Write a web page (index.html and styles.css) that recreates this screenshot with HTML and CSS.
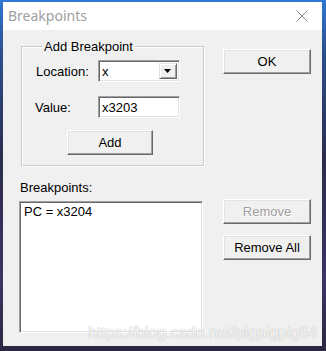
FILE: index.html
```html
<!DOCTYPE html>
<html lang="en">
<head>
    <meta charset="UTF-8">
    <title>Breakpoints</title>
    <link rel="stylesheet" href="styles.css">
</head>
<body>
    <div class="window">
        <div class="titlebar">
            <span class="title">Breakpoints</span>
            <svg class="close" width="12" height="12" viewBox="0 0 12 12">
                <path d="M0.5 0.5 L11.5 11.5 M11.5 0.5 L0.5 11.5" stroke="#8a8a8a" stroke-width="1" fill="none"/>
            </svg>
        </div>
        <div class="client">
            <div class="left">
                <fieldset class="group">
                    <legend>Add Breakpoint</legend>
                    <div class="form-grid">
                        <label class="lbl">Location:</label>
                        <div class="combo sunken">
                            <span class="combo-text">x</span>
                            <span class="combo-btn">
                                <svg width="8" height="5" viewBox="0 0 8 5"><path d="M0 0 H7 L3.5 4 Z" fill="#000"/></svg>
                            </span>
                        </div>
                        <label class="lbl lbl-value">Value:</label>
                        <div class="field sunken">x3203</div>
                    </div>
                    <button class="btn btn-add">Add</button>
                </fieldset>
                <div class="list-label">Breakpoints:</div>
                <div class="listbox sunken">
                    <div class="list-item">PC = x3204</div>
                </div>
            </div>
            <div class="right">
                <button class="btn btn-ok">OK</button>
                <button class="btn btn-remove" disabled>Remove</button>
                <button class="btn btn-remove-all">Remove All</button>
            </div>
        </div>
        <div class="watermark">https://blog.csdn.net/pigpigpig64</div>
    </div>
</body>
</html>
```

FILE: styles.css
```css
/* General */
* {
    margin: 0;
    padding: 0;
    box-sizing: border-box;
}

body {
    width: 326px;
    height: 351px;
    overflow: hidden;
    font-family: "Liberation Sans", Arial, sans-serif;
    font-size: 13px;
    color: #000;
    background: linear-gradient(180deg, #2f78d4 0%, #2d4f8e 15%, #2b2c4c 45%, #3b3562 80%, #2a2840 100%);
}

/* Window */
.window {
    position: relative;
    width: 319px;
    height: 344px;
    margin: 2px 0 0 3px;
    background: #f0f0f0;
}

.titlebar {
    height: 28px;
    background: #ffffff;
    display: flex;
    align-items: center;
    justify-content: space-between;
    padding: 0 14px 0 5px;
}

.title {
    font-family: "Noto Sans", sans-serif;
    font-size: 14px;
    color: #a0a0a0;
    line-height: 18px;
}

.close {
    display: block;
}

/* Client area */
.client {
    display: flex;
    padding: 9px 0 0 17px;
}

.left {
    width: 184px;
}

/* Group box */
.group {
    margin-left: 1px;
    width: 183px;
    height: 127px;
    border: 1px solid #c9c9c9;
    box-shadow: inset 1px 1px #ffffff, 1px 1px #ffffff;
    padding: 6px 0 0 13px;
}

.group legend {
    margin-left: 7px;
    padding: 0 2px;
    line-height: 15px;
}

.form-grid {
    display: grid;
    grid-template-columns: 63px 82px;
    grid-auto-rows: 22px;
    row-gap: 14px;
    align-items: center;
}

.lbl {
    padding-left: 1px;
}

.lbl-value {
    padding-left: 0;
}

/* Sunken 3D edge */
.sunken {
    background: #ffffff;
    border: 1px solid;
    border-color: #a0a0a0 #ffffff #ffffff #a0a0a0;
    box-shadow: inset 1px 1px #696969, inset -1px -1px #e3e3e3;
}

.combo {
    height: 22px;
    display: flex;
    align-items: stretch;
    padding: 2px;
}

.combo-text {
    flex: 1;
    line-height: 18px;
    padding-left: 1px;
}

.combo-btn {
    width: 18px;
    background: #f0f0f0;
    border: 1px solid;
    border-color: #e3e3e3 #696969 #696969 #e3e3e3;
    box-shadow: inset 1px 1px #ffffff, inset -1px -1px #a0a0a0;
    display: flex;
    align-items: center;
    justify-content: center;
}

.combo-btn svg {
    display: block;
}

.field {
    height: 22px;
    line-height: 18px;
    padding: 2px 3px;
}

/* Buttons */
.btn {
    font-family: "Liberation Sans", Arial, sans-serif;
    font-size: 13px;
    color: #000;
    width: 88px;
    height: 25px;
    background: #f0f0f0;
    border: 1px solid;
    border-color: #ffffff #696969 #696969 #ffffff;
    box-shadow: inset -1px -1px #a0a0a0, inset 1px 1px #e3e3e3;
    display: block;
}

.btn:disabled {
    color: #a0a0a0;
    text-shadow: 1px 1px #ffffff;
}

.btn-add {
    width: 86px;
    margin: 12px 0 0 32px;
}

.right {
    margin-left: 19px;
}

.btn-ok {
    margin-top: 10px;
}

.btn-remove {
    margin-top: 125px;
}

.btn-remove-all {
    margin-top: 11px;
}

/* List */
.list-label {
    margin-top: 14px;
    line-height: 16px;
}

.listbox {
    margin-top: 5px;
    margin-left: -1px;
    width: 184px;
    height: 132px;
    padding: 2px 4px;
}

.list-item {
    line-height: 16px;
}

/* Watermark overlay */
.watermark {
    position: absolute;
    left: 85px;
    top: 322px;
    font-size: 16px;
    line-height: 18px;
    color: rgba(255, 255, 255, 0.9);
    text-shadow: 0 0 1px rgba(0, 0, 0, 0.35);
    white-space: nowrap;
}
```
